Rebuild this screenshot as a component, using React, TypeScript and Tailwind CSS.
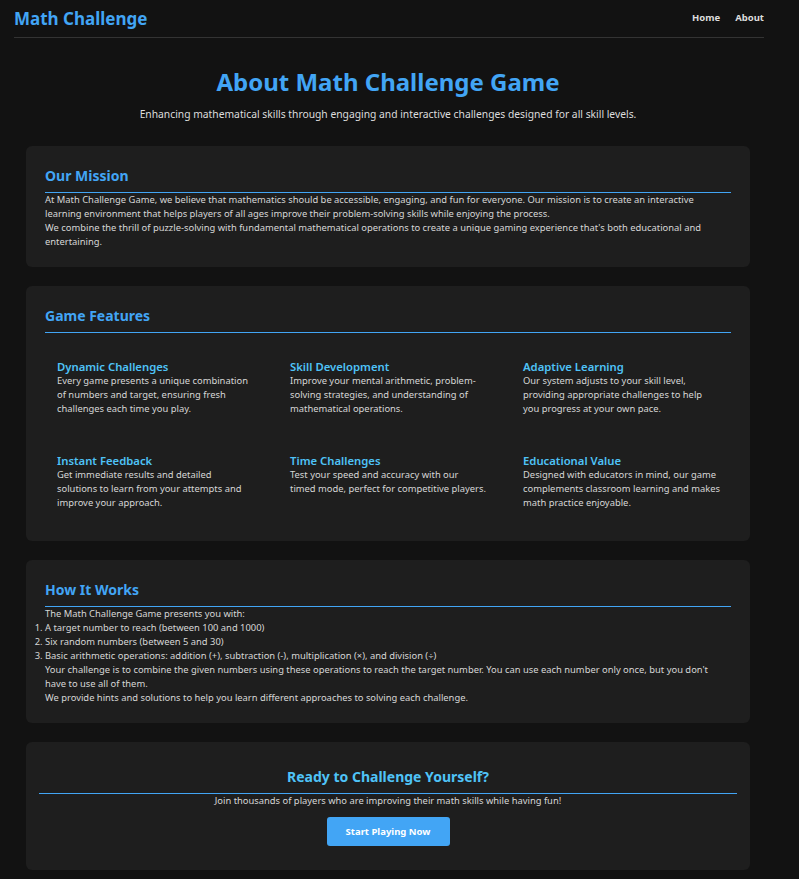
const features = [
  {
    title: "Dynamic Challenges",
    text: "Every game presents a unique combination of numbers and target, ensuring fresh challenges each time you play.",
  },
  {
    title: "Skill Development",
    text: "Improve your mental arithmetic, problem-solving strategies, and understanding of mathematical operations.",
  },
  {
    title: "Adaptive Learning",
    text: "Our system adjusts to your skill level, providing appropriate challenges to help you progress at your own pace.",
  },
  {
    title: "Instant Feedback",
    text: "Get immediate results and detailed solutions to learn from your attempts and improve your approach.",
  },
  {
    title: "Time Challenges",
    text: "Test your speed and accuracy with our timed mode, perfect for competitive players.",
  },
  {
    title: "Educational Value",
    text: "Designed with educators in mind, our game complements classroom learning and makes math practice enjoyable.",
    wide: true,
  },
];

function SectionTitle({ children }: { children: string }) {
  return (
    <h2 className="border-b border-[#42a5f5] pb-[7px] text-[14px] font-bold leading-[18px] text-[#42a5f5]">
      {children}
    </h2>
  );
}

export default function App() {
  return (
    <div className="min-h-screen bg-[#121212] font-['Noto_Sans',sans-serif] text-[#d6d6d6]">
      <div className="ml-[14px] w-[750px]">
        <header className="flex h-[38px] items-center justify-between border-b border-[#333]">
          <a className="text-[17px] font-bold leading-none text-[#42a5f5]" href="#">
            Math Challenge
          </a>
          <nav className="flex gap-[15px] text-[9.5px] font-bold text-[#ddd]">
            <a href="#">Home</a>
            <a href="#">About</a>
          </nav>
        </header>

        <main className="pl-[12px] pr-[14px] pb-[10px]">
          <section className="pt-[28px] text-center">
            <h1 className="text-[24px] font-bold leading-[31px] text-[#42a5f5]">About Math Challenge Game</h1>
            <p className="mt-[10px] text-[10.3px] leading-[14px] text-[#ddd]">
              Enhancing mathematical skills through engaging and interactive challenges designed for all skill levels.
            </p>
          </section>

          <div className="mt-[25px] flex flex-col gap-[19px] text-[9.4px] leading-[14px]">
            <section className="rounded-md bg-[#1e1e1e] px-[19px] pt-[21px] pb-[18px]">
              <SectionTitle>Our Mission</SectionTitle>
              <p>
                At Math Challenge Game, we believe that mathematics should be accessible, engaging, and fun for
                everyone. Our mission is to create an interactive learning environment that helps players of all ages
                improve their problem-solving skills while enjoying the process.
              </p>
              <p>
                We combine the thrill of puzzle-solving with fundamental mathematical operations to create a unique
                gaming experience that's both educational and entertaining.
              </p>
            </section>

            <section className="rounded-md bg-[#1e1e1e] px-[19px] pt-[21px] pb-[19px]">
              <SectionTitle>Game Features</SectionTitle>
              <div className="mt-[14px] grid grid-cols-3 gap-[13px]">
                {features.map((feature) => (
                  <div className={feature.wide ? "p-[12px] pr-[4px]" : "p-[12px]"} key={feature.title}>
                    <h3 className="text-[11.3px] font-semibold leading-[15px] text-[#4fc3f7]">{feature.title}</h3>
                    <p>{feature.text}</p>
                  </div>
                ))}
              </div>
            </section>

            <section className="rounded-md bg-[#1e1e1e] px-[19px] pt-[21px] pb-[18px]">
              <SectionTitle>How It Works</SectionTitle>
              <p>The Math Challenge Game presents you with:</p>
              <ol className="list-decimal">
                <li>A target number to reach (between 100 and 1000)</li>
                <li>Six random numbers (between 5 and 30)</li>
                <li>Basic arithmetic operations: addition (+), subtraction (-), multiplication (×), and division (÷)</li>
              </ol>
              <p>
                Your challenge is to combine the given numbers using these operations to reach the target number. You
                can use each number only once, but you don't have to use all of them.
              </p>
              <p>We provide hints and solutions to help you learn different approaches to solving each challenge.</p>
            </section>

            <section className="rounded-md bg-[#1e1e1e] px-[13px] pt-[26px] pb-[24px] text-center">
              <h2 className="border-b border-[#42a5f5] pb-[7px] text-[14px] font-bold leading-[18px] text-[#4fc3f7]">
                Ready to Challenge Yourself?
              </h2>
              <p>Join thousands of players who are improving their math skills while having fun!</p>
              <button
                className="mt-[9px] h-[29px] w-[123px] rounded-[3px] bg-[#42a5f5] text-[9.5px] font-bold text-white"
                type="button"
              >
                Start Playing Now
              </button>
            </section>
          </div>
        </main>
      </div>
    </div>
  );
}
